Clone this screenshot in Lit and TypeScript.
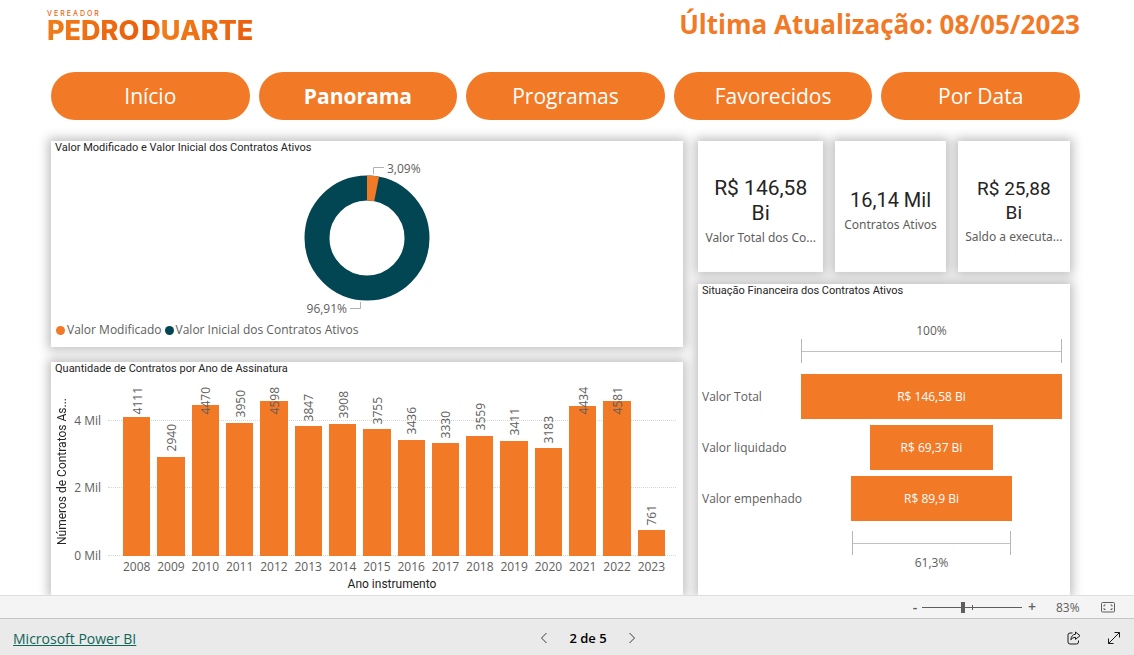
import { LitElement, html, css } from "lit";
import { customElement, property, state } from "lit/decorators.js";
import { classMap } from "lit/directives/class-map.js";

const tokens = css`
  :host {
    --orange: #f27926;
    --teal: #014652;
    --ink: #252423;
    --muted: #605e5c;
    --ui: "Open Sans", "Noto Sans", sans-serif;
    --din: Roboto, "Liberation Sans", sans-serif;
    box-sizing: border-box;
  }
  *,
  *::before,
  *::after {
    box-sizing: border-box;
  }
`;

@customElement("report-panel")
class ReportPanel extends LitElement {
  @property() heading = "";

  static styles = [
    tokens,
    css`
      :host {
        display: flex;
        flex-direction: column;
        min-width: 0;
        min-height: 0;
        background: #fff;
        box-shadow: 0 0 10px 3px rgba(0, 0, 0, 0.25);
      }
      .heading {
        margin: 0;
        padding: 0 4px;
        font: 400 11px/14px var(--din);
        color: var(--ink);
        white-space: nowrap;
      }
    `,
  ];

  render() {
    return html`<h2 class="heading">${this.heading}</h2>
      <slot></slot>`;
  }
}

@customElement("donut-chart")
class DonutChart extends LitElement {
  static styles = [
    tokens,
    css`
      :host {
        display: flex;
        flex-direction: column;
        flex: 1;
        justify-content: space-between;
        min-height: 0;
        padding: 3px 5px 8px;
      }
      .donut {
        align-self: center;
        display: block;
      }
      .label {
        font: 12px var(--ui);
        fill: var(--muted);
      }
      .leader {
        fill: none;
        stroke: #b3b0ad;
      }
      .rest {
        fill: none;
        stroke: var(--teal);
        stroke-width: 25;
      }
      .slice {
        fill: none;
        stroke: var(--orange);
        stroke-width: 25;
      }
      .legend {
        display: flex;
        gap: 3px;
        margin: 0;
        padding: 0;
        list-style: none;
        font: 12px/18px var(--ui);
        color: var(--muted);
        white-space: nowrap;
      }
      .entry {
        display: flex;
        align-items: center;
        gap: 2px;
      }
      .dot {
        width: 9px;
        height: 9px;
        border-radius: 50%;
        background: var(--teal);
      }
      .dot.modified {
        background: var(--orange);
      }
    `,
  ];

  render() {
    return html`
      <svg class="donut" width="160" height="160" viewBox="-80 -80 160 160" role="img" aria-label="Valor Modificado 3,09%, Valor Inicial 96,91%">
        <circle class="rest" r="50"></circle>
        <circle class="slice" r="50" pathLength="100" stroke-dasharray="3.09 96.91" transform="rotate(-90)"></circle>
        <path class="leader" d="M6.5 -64V-70.5H17"></path>
        <path class="leader" d="M-6.5 64V70.5H-17"></path>
        <text class="label" x="20" y="-65">3,09%</text>
        <text class="label" x="-20" y="75" text-anchor="end">96,91%</text>
      </svg>
      <ul class="legend">
        <li class="entry"><span class="dot modified"></span>Valor Modificado</li>
        <li class="entry"><span class="dot"></span>Valor Inicial dos Contratos Ativos</li>
      </ul>
    `;
  }
}

const CONTRACTS: [number, number][] = [
  [2008, 4111], [2009, 2940], [2010, 4470], [2011, 3950],
  [2012, 4598], [2013, 3847], [2014, 3908], [2015, 3755],
  [2016, 3436], [2017, 3330], [2018, 3559], [2019, 3411],
  [2020, 3183], [2021, 4434], [2022, 4581], [2023, 761],
];
const AXIS_MAX = 5000;

@customElement("year-chart")
class YearChart extends LitElement {
  static styles = [
    tokens,
    css`
      :host {
        flex: 1;
        min-height: 0;
        display: grid;
        grid-template-columns: 14px 32px minmax(0, 1fr);
        grid-template-rows: minmax(0, 1fr) 21px 18px;
        padding: 11px 7px 0 4px;
        font: 12px/16px var(--ui);
        color: var(--muted);
      }
      .ytitle {
        writing-mode: vertical-rl;
        transform: rotate(180deg);
        align-self: center;
        font: 12px/14px var(--din);
        color: var(--ink);
        white-space: nowrap;
      }
      .yaxis {
        position: relative;
      }
      .tick {
        position: absolute;
        right: 0;
        transform: translateY(50%);
        white-space: nowrap;
      }
      .plot {
        position: relative;
        margin-left: 7px;
      }
      .grid {
        position: absolute;
        left: 0;
        right: 0;
        border-top: 1px dotted #d8d6d4;
      }
      .bars {
        position: relative;
        display: grid;
        grid-template-columns: repeat(16, minmax(0, 1fr));
        gap: 7px;
        height: 100%;
        padding: 0 11px 0 15px;
      }
      .col {
        position: relative;
        display: flex;
        align-items: flex-end;
      }
      .bar {
        width: 100%;
        background: var(--orange);
      }
      .value {
        position: absolute;
        left: 50%;
        writing-mode: vertical-rl;
        transform: translateX(-50%) rotate(180deg);
        margin-left: 1px;
      }
      .years {
        grid-column: 3;
        display: grid;
        grid-template-columns: repeat(16, minmax(0, 1fr));
        gap: 7px;
        margin-left: 7px;
        padding: 3px 11px 0 15px;
      }
      .year {
        display: flex;
        justify-content: center;
      }
      .xtitle {
        grid-column: 3;
        margin-left: 7px;
        text-align: center;
        font: 12px/14px var(--din);
        color: var(--ink);
      }
    `,
  ];

  render() {
    return html`
      <div class="ytitle">Números de Contratos As...</div>
      <div class="yaxis">
        ${[0, 2, 4].map((n) => html`<span class="tick" style="bottom:${(n * 100000) / AXIS_MAX}%">${n} Mil</span>`)}
      </div>
      <div class="plot">
        ${[0, 2, 4].map((n) => html`<div class="grid" style="bottom:${(n * 100000) / AXIS_MAX}%"></div>`)}
        <div class="bars">
          ${CONTRACTS.map(([, v]) => {
            const h = (v / AXIS_MAX) * 100;
            return html`<div class="col">
              <div class="bar" style="height:${h}%"></div>
              <span class="value" style="bottom:min(calc(${h}% + 5px), calc(100% - 27px))">${v}</span>
            </div>`;
          })}
        </div>
      </div>
      <div class="years">${CONTRACTS.map(([y]) => html`<span class="year">${y}</span>`)}</div>
      <div class="xtitle">Ano instrumento</div>
    `;
  }
}

@customElement("funnel-chart")
class FunnelChart extends LitElement {
  static styles = [
    tokens,
    css`
      :host {
        display: grid;
        grid-template-columns: 99px minmax(0, 1fr);
        grid-template-rows: 16px 32px repeat(3, 51px) 31px 16px;
        align-items: center;
        padding: 25px 8px 0 4px;
        font: 12px/16px var(--ui);
        color: var(--muted);
      }
      .percent,
      .bracket,
      .bar {
        grid-column: 2;
        justify-self: center;
      }
      .bracket {
        height: 24px;
        border: solid #b8b6b4;
        border-width: 0 1px;
        background: linear-gradient(#c4c2c0, #c4c2c0) center / 100% 1px no-repeat;
      }
      .upper {
        align-self: start;
      }
      .lower {
        align-self: end;
      }
      .name {
        grid-column: 1;
        white-space: nowrap;
      }
      .bar {
        height: 45px;
        display: flex;
        align-items: center;
        justify-content: center;
        background: var(--orange);
        color: #fff;
        white-space: nowrap;
      }
    `,
  ];

  render() {
    const rows: [string, string, number][] = [
      ["Valor Total", "R$ 146,58 Bi", 146.58],
      ["Valor liquidado", "R$ 69,37 Bi", 69.37],
      ["Valor empenhado", "R$ 89,9 Bi", 89.9],
    ];
    return html`
      <span class="percent">100%</span>
      <div class="bracket upper" style="width:100%"></div>
      ${rows.map(
        ([name, text, v]) => html`<span class="name">${name}</span>
          <div class="bar" style="width:${(v / 146.58) * 100}%">${text}</div>`
      )}
      <div class="bracket lower" style="width:61.3%"></div>
      <span class="percent">61,3%</span>
    `;
  }
}

@customElement("app-root")
class AppRoot extends LitElement {
  @state() private page = "Panorama";

  static styles = [
    tokens,
    css`
      :host {
        display: flex;
        flex-direction: column;
        height: 100vh;
        min-height: 560px;
        background: #fff;
        font-family: var(--ui);
        color: var(--muted);
      }
      button {
        font: inherit;
        color: inherit;
        border: 0;
        padding: 0;
        background: none;
        cursor: pointer;
      }
      .report {
        flex: 1;
        min-height: 0;
        display: flex;
        flex-direction: column;
        overflow: hidden;
      }
      .header {
        display: flex;
        justify-content: space-between;
        align-items: flex-start;
        height: 72px;
        padding: 6px 54px 0 47px;
      }
      .logo {
        display: flex;
        flex-direction: column;
        padding-top: 4px;
        font-family: Inter, sans-serif;
        color: #ec6512;
      }
      .role {
        font-size: 7px;
        line-height: 8px;
        font-weight: 500;
        letter-spacing: 2px;
      }
      .name {
        display: flex;
        gap: 2px;
        font-size: 27px;
        line-height: 26px;
        font-weight: 800;
        background: linear-gradient(115deg, #f07f1a, #ea5b0c 50%, #f07f1a 55%, #ea5b0c);
        background-clip: text;
        -webkit-background-clip: text;
        color: transparent;
      }
      .updated {
        margin: 0;
        font-size: 26px;
        line-height: 36px;
        font-weight: 700;
        color: var(--orange);
        white-space: nowrap;
      }
      .tabs {
        display: grid;
        grid-template-columns: repeat(5, minmax(0, 1fr));
        gap: 9px;
        padding: 0 54px 0 51px;
      }
      .tab {
        height: 48px;
        padding-top: 1px;
        border-radius: 24px;
        background: var(--orange);
        color: #fff;
        font-size: 21px;
        line-height: 47px;
      }
      .tab.current {
        font-weight: 700;
      }
      .board {
        flex: 1;
        min-height: 0;
        display: grid;
        grid-template-columns: 632fr 372fr;
        gap: 15px;
        padding: 21px 64px 0 51px;
      }
      .left,
      .right {
        display: grid;
        min-width: 0;
        min-height: 0;
      }
      .left {
        grid-template-rows: 206fr 233fr;
        gap: 15px;
      }
      .right {
        grid-template-rows: 131fr 311fr;
        gap: 12px;
      }
      .cards {
        display: grid;
        grid-template-columns: 125fr 110fr 112fr;
        gap: 12px;
        min-height: 0;
      }
      .card {
        display: flex;
        flex-direction: column;
        align-items: center;
        justify-content: center;
        gap: 3px;
        min-width: 0;
        padding: 9px 4px 0;
        background: #fff;
        box-shadow: 0 0 10px 3px rgba(0, 0, 0, 0.25);
        text-align: center;
      }
      .figure {
        padding: 0 8px;
        font: 20px/25px var(--din);
        color: var(--ink);
      }
      .figure.large {
        font-size: 21px;
      }
      .figure.small {
        font-size: 19px;
        line-height: 24px;
      }
      .caption {
        font: 12px/18px "Noto Sans", "Open Sans", sans-serif;
        white-space: nowrap;
      }
      .zoombar {
        display: flex;
        align-items: center;
        justify-content: flex-end;
        height: 23px;
        padding-right: 18px;
        background: #f4f4f4;
        border-top: 1px solid #dedede;
        font-size: 12px;
      }
      .step {
        width: 10px;
        font-size: 14px;
        line-height: 20px;
        font-weight: 600;
      }
      .slider {
        appearance: none;
        -webkit-appearance: none;
        width: 100px;
        height: 11px;
        margin: 0 5px 0 2px;
        background:
          linear-gradient(#605e5c, #605e5c) 50px center / 1px 5px no-repeat,
          linear-gradient(#605e5c, #605e5c) center / 100% 1px no-repeat;
      }
      .slider::-webkit-slider-thumb {
        -webkit-appearance: none;
        width: 4px;
        height: 11px;
        background: #605e5c;
      }
      .percent {
        width: 24px;
        margin: 0 21px 0 19px;
      }
      .icon {
        display: flex;
      }
      .footer {
        display: grid;
        grid-template-columns: 1fr auto 1fr;
        align-items: center;
        height: 37px;
        padding: 2px 13px 0;
        background: #eaeaea;
        border-top: 1px solid #c6c6c6;
        color: #000;
        font-size: 13px;
      }
      .brand {
        justify-self: start;
        font-size: 14px;
        color: #0f6558;
      }
      .pager {
        display: flex;
        align-items: center;
        gap: 21px;
        padding-left: 42px;
        font-weight: 600;
      }
      .actions {
        display: flex;
        justify-self: end;
        gap: 26px;
      }
    `,
  ];

  render() {
    const tabs = ["Início", "Panorama", "Programas", "Favorecidos", "Por Data"];
    return html`
      <main class="report">
        <header class="header">
          <div class="logo">
            <span class="role">VEREADOR</span>
            <span class="name"><span>PEDRO</span><span>DUARTE</span></span>
          </div>
          <h1 class="updated">Última Atualização: 08/05/2023</h1>
        </header>
        <nav class="tabs">
          ${tabs.map(
            (t) => html`<button class=${classMap({ tab: true, current: t === this.page })} @click=${() => (this.page = t)}>${t}</button>`
          )}
        </nav>
        <div class="board">
          <div class="left">
            <report-panel heading="Valor Modificado e Valor Inicial dos Contratos Ativos"><donut-chart></donut-chart></report-panel>
            <report-panel heading="Quantidade de Contratos por Ano de Assinatura"><year-chart></year-chart></report-panel>
          </div>
          <div class="right">
            <div class="cards">
              <div class="card"><span class="figure large">R$ 146,58 Bi</span><span class="caption">Valor Total dos Co...</span></div>
              <div class="card"><span class="figure">16,14 Mil</span><span class="caption">Contratos Ativos</span></div>
              <div class="card"><span class="figure small">R$ 25,88 Bi</span><span class="caption">Saldo a executa...</span></div>
            </div>
            <report-panel heading="Situação Financeira dos Contratos Ativos"><funnel-chart></funnel-chart></report-panel>
          </div>
        </div>
      </main>
      <div class="zoombar">
        <button class="step" aria-label="Reduzir">-</button>
        <input class="slider" type="range" min="0" max="100" value="41" aria-label="Zoom" />
        <button class="step" aria-label="Ampliar">+</button>
        <span class="percent">83%</span>
        <button class="icon" aria-label="Ajustar à página">
          <svg width="15" height="11" viewBox="0 0 15 11" fill="none" stroke="#605e5c">
            <rect x="0.5" y="0.5" width="13" height="9.5" rx="1"></rect>
            <path d="M3 4.5V3H4.5M9.5 3H11V4.5M11 6V7.5H9.5M4.5 7.5H3V6"></path>
          </svg>
        </button>
      </div>
      <footer class="footer">
        <a class="brand" href="#">Microsoft Power BI</a>
        <div class="pager">
          <button class="icon" aria-label="Página anterior">
            <svg width="8" height="12" viewBox="0 0 8 12" fill="none" stroke="#3b3a39"><path d="M6.5 1L1.5 6L6.5 11"></path></svg>
          </button>
          <span>2 de 5</span>
          <button class="icon" aria-label="Próxima página">
            <svg width="8" height="12" viewBox="0 0 8 12" fill="none" stroke="#3b3a39"><path d="M1.5 1L6.5 6L1.5 11"></path></svg>
          </button>
        </div>
        <div class="actions">
          <button class="icon" aria-label="Compartilhar">
            <svg width="14" height="14" viewBox="0 0 14 14" fill="none" stroke="#1b1a19" stroke-linejoin="round">
              <path d="M5.5 2H3Q1 2 1 4V11Q1 13 3 13H9.5Q11.5 13 11.5 11V9.5"></path>
              <path d="M8.5 1L13 4.7L8.5 8.4V6.3Q5.5 6.2 3.8 8.8Q4.3 3.7 8.5 3.2Z"></path>
            </svg>
          </button>
          <button class="icon" aria-label="Tela inteira">
            <svg width="14" height="14" viewBox="0 0 14 14" fill="none" stroke="#1b1a19">
              <path d="M1.5 12.5L12.5 1.5M7.5 1.5H12.5V6.5M1.5 7.5V12.5H6.5"></path>
            </svg>
          </button>
        </div>
      </footer>
    `;
  }
}
